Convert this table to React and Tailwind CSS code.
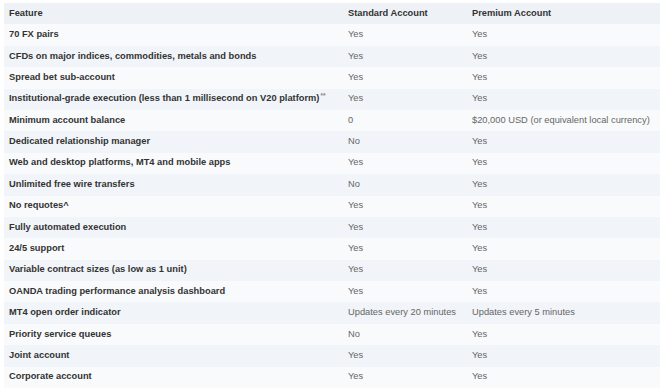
import React from "react";

const rows = [
  ["70 FX pairs", "Yes", "Yes"],
  ["CFDs on major indices, commodities, metals and bonds", "Yes", "Yes"],
  ["Spread bet sub-account", "Yes", "Yes"],
  ["Institutional-grade execution (less than 1 millisecond on V20 platform)", "Yes", "Yes", true],
  ["Minimum account balance", "0", "$20,000 USD (or equivalent local currency)"],
  ["Dedicated relationship manager", "No", "Yes"],
  ["Web and desktop platforms, MT4 and mobile apps", "Yes", "Yes"],
  ["Unlimited free wire transfers", "No", "Yes"],
  ["No requotes^", "Yes", "Yes"],
  ["Fully automated execution", "Yes", "Yes"],
  ["24/5 support", "Yes", "Yes"],
  ["Variable contract sizes (as low as 1 unit)", "Yes", "Yes"],
  ["OANDA trading performance analysis dashboard", "Yes", "Yes"],
  ["MT4 open order indicator", "Updates every 20 minutes", "Updates every 5 minutes"],
  ["Priority service queues", "No", "Yes"],
  ["Joint account", "Yes", "Yes"],
  ["Corporate account", "Yes", "Yes"],
];

export default function App() {
  return (
    <div className="w-[660px] h-[390px] bg-white overflow-hidden pt-[3px] pl-[4px]" style={{ fontFamily: '"Liberation Sans", Arial, sans-serif' }}>
      <div className="flex flex-col text-[9.3px]">
        <div className="grid grid-cols-[339px_124px_1fr] items-center h-[21.4px] bg-[#eef2f7] font-bold text-[#333]">
          <div className="pl-[5px]">Feature</div>
          <div className="pl-[5px]">Standard Account</div>
          <div className="pl-[5px]">Premium Account</div>
        </div>
        {rows.map((r, i) => (
          <div
            key={i}
            className={`grid grid-cols-[339px_124px_1fr] items-center h-[21.4px] ${i % 2 === 0 ? "bg-[#f9fafc]" : "bg-[#f1f4f8]"}`}
          >
            <div className="pl-[5px] font-bold text-[#333] whitespace-nowrap">
              {r[0]}
              {r[3] && <span className="relative -top-[3px] ml-[1px] text-[6.5px] text-[#888]">**</span>}
            </div>
            <div className="pl-[5px] text-[#666] whitespace-nowrap">{r[1]}</div>
            <div className="pl-[5px] text-[#666] whitespace-nowrap">{r[2]}</div>
          </div>
        ))}
      </div>
    </div>
  );
}
